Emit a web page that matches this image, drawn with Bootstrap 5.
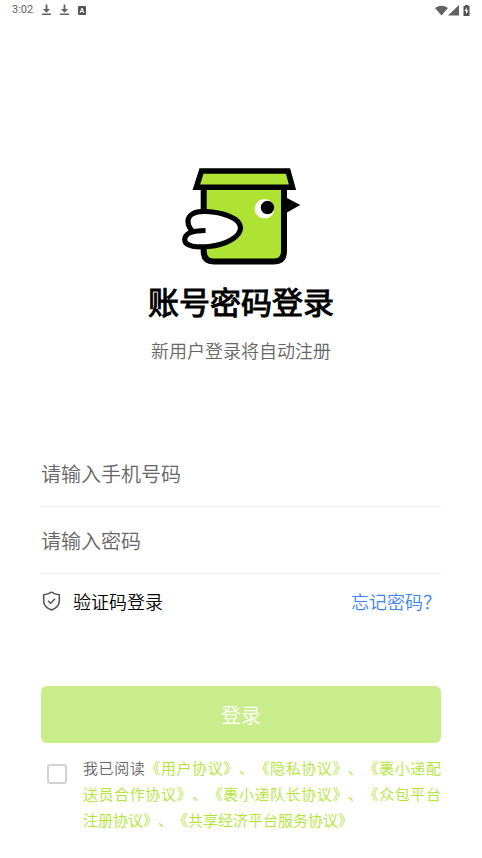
<!DOCTYPE html>
<html lang="zh-CN">
<head>
<meta charset="utf-8">
<meta name="viewport" content="width=device-width, initial-scale=1">
<title>账号密码登录</title>
<link href="https://cdn.jsdelivr.net/npm/bootstrap@5.3.0/dist/css/bootstrap.min.css" rel="stylesheet">
<style>
  body { font-family: "Noto Sans CJK SC", sans-serif; font-weight: 350; color: #000; background: #fff; }
  .status-bar { height: 20px; padding: 0 12px; color: #626262; font: 11px/20px Roboto, sans-serif; }
  .status-bar svg { display: block; }
  .status-icons { gap: 9px; }
  .page-body { padding: 148px 41px 24px; }
  .brand { width: 120px; height: 98px; }
  .page-title { font-size: 31px; line-height: 40px; font-weight: 400; -webkit-text-stroke: 1px #000; margin: 15px 0 0; }
  .hint { font-size: 18px; line-height: 26px; color: #666; margin: 16px 0 0; }
  .login-form { margin-top: 77px; }
  .field { height: 67px; padding: 0; font-size: 20px; font-weight: 350; line-height: 30px; color: #333; border: 0; border-bottom: 1px solid #f0f0f0; border-radius: 0; background: none; }
  .field:focus { box-shadow: none; border-color: #b0e532; background: none; }
  .field::placeholder { color: #666; opacity: 1; }
  .switches { font-size: 18px; line-height: 26px; padding: 14px 0 0; }
  .switches a { text-decoration: none; }
  .mode { color: #000; gap: 11px; }
  .forgot { color: #3b82f0; }
  .submit { height: 57px; margin-top: 72px; padding: 0; font-size: 20px; font-weight: 350; border: 0; border-radius: 6px; color: #fff; background: #c9ed8b; }
  .submit:hover { color: #fff; background: #b0e532; }
  .agreement { margin-top: 12px; padding-left: 6px; gap: 16px; }
  .agreement .form-check-input { width: 20px; height: 20px; margin: 9px 0 0; border: 2px solid #d2d2d2; border-radius: 3px; }
  .terms { font-size: 15px; line-height: 26px; text-align: justify; text-spacing-trim: space-all; color: #b0e532; }
  .terms label { color: #666; }
  .terms a { color: inherit; text-decoration: none; }
</style>
<script src="https://cdn.jsdelivr.net/npm/bootstrap@5.3.0/dist/js/bootstrap.bundle.min.js" defer></script>
</head>
<body>
<header class="status-bar d-flex align-items-center justify-content-between">
  <div class="status-icons d-flex align-items-center">
    <span>3:02</span>
    <svg width="9" height="12" viewBox="0 0 10 12" fill="#626262" aria-hidden="true"><path d="M4 0h2v5h3L5 9 1 5h3zM0 10h10v1.500H0z"/></svg>
    <svg width="9" height="12" viewBox="0 0 10 12" fill="#626262" aria-hidden="true"><path d="M4 0h2v5h3L5 9 1 5h3zM0 10h10v1.500H0z"/></svg>
    <svg width="9" height="9" viewBox="0 0 9 9" aria-hidden="true"><rect width="8" height="9" rx="1" fill="#555"/><path d="M2 7l2-5 2 5M3 5.400h2" fill="none" stroke="#fff"/></svg>
  </div>
  <div class="d-flex align-items-center">
    <svg width="13" height="11" viewBox="0 0 13 11" fill="#626262" aria-hidden="true"><path d="M0 3q6.500-4.600 13 0L6.500 10.500z"/></svg>
    <svg class="me-1" width="11" height="11" viewBox="0 0 11 11" fill="#626262" aria-hidden="true"><path d="M11 0v10.500H0z"/></svg>
    <svg width="7" height="11" viewBox="0 0 6 11" aria-hidden="true"><path d="M1.500 1V0h3v1H6v10H0V1z" fill="#555"/><path d="M3.500 2.500L1 6h1.500v3L5 5.500H3.500z" fill="#fff"/></svg>
  </div>
</header>

<main class="page-body">
  <div class="text-center">
    <svg class="brand" viewBox="0 0 120 98" role="img" aria-label="裹小递">
      <path d="M22.700 20v63q0 10.500 10 10.500h60.300q10 0 10-10.500V20" fill="#aee233" stroke="#000" stroke-width="6"/>
      <path d="M20.500 3h86.500l4.500 16.300H15.300z" fill="#aee233" stroke="#000" stroke-width="5.500"/>
      <path d="M105 29.500l14.300 7.500-14.300 8z"/>
      <circle cx="83.500" cy="40.700" r="9.800" fill="#fff"/><circle cx="86.500" cy="39.500" r="6.700"/>
      <path d="M24.500 62.500C15 62.500 4 64 3.700 71.500 3.500 79 17 79.500 28 78.500 44 77 60 69 59.500 59.500 59 50 41 44 25 43.500 13 43 7 47 7 53.500 7 58 9 61 12.500 64.500" fill="#fff" stroke="#000" stroke-width="5.200"/>
    </svg>
    <h1 class="page-title">账号密码登录</h1>
    <p class="hint">新用户登录将自动注册</p>
  </div>

  <form class="login-form">
    <input class="form-control field" type="tel" placeholder="请输入手机号码" aria-label="手机号码">
    <input class="form-control field" type="password" placeholder="请输入密码" aria-label="密码">
    <div class="switches d-flex justify-content-between align-items-center">
      <a class="mode d-flex align-items-center" href="#">
        <svg width="21" height="20" viewBox="0 0 21 20" fill="none" stroke="#555" aria-hidden="true"><path d="M10.500 1.200c2.400 1.600 4.800 2.300 7.800 2.500v6.600c0 4.300-3.400 7-7.800 8.700-4.400-1.700-7.800-4.400-7.800-8.700V3.700c3-.2 5.400-.9 7.800-2.500z" stroke-width="1.600" stroke-linejoin="round"/><path d="M7 9.700l2.700 2.600 4.300-4.500" stroke-width="1.500"/></svg>
        <span>验证码登录</span>
      </a>
      <a class="forgot" href="#">忘记密码？</a>
    </div>
    <button class="btn submit w-100" type="submit">登录</button>
    <div class="agreement d-flex align-items-start">
      <input class="form-check-input flex-shrink-0" type="checkbox" id="agree">
      <div class="terms"><label class="d-inline" for="agree">我已阅读</label><a href="#">《用户协议》</a>、<a href="#">《隐私协议》</a>、<a href="#">《裹小递配送员合作协议》</a>、<a href="#">《裹小递队长协议》</a>、<a href="#">《众包平台注册协议》</a>、<a href="#">《共享经济平台服务协议》</a></div>
    </div>
  </form>
</main>
</body>
</html>
